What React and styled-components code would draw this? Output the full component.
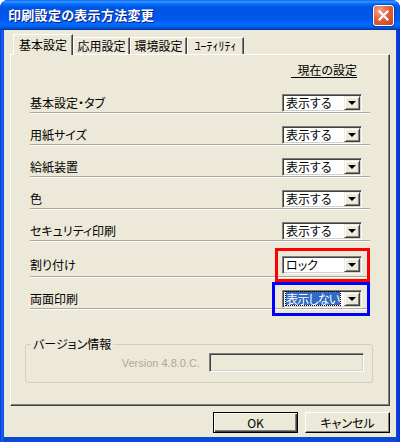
import React from 'react';
import styled, { createGlobalStyle } from 'styled-components';

const GlobalStyle = createGlobalStyle`
    body {
        margin: 0;
        background: #fff;
        font-family: "Noto Sans CJK JP", "Noto Sans", sans-serif;
        font-size: 12px;
        line-height: 14px;
        font-feature-settings: "palt" 1;
    }
    * {
        box-sizing: border-box;
    }
`;

const Frame = styled.div`
    width: 400px;
    height: 442px;
    display: flex;
    flex-direction: column;
    background: linear-gradient(to right, #0831d9 0, #166aee 2px, #0b47da 4px, #0b47da 396px, #0831d9 100%);
    border-radius: 8px 8px 0 0;
    overflow: hidden;
`;

const TitleBar = styled.div`
    height: 30px;
    flex-shrink: 0;
    display: flex;
    align-items: center;
    justify-content: space-between;
    padding: 0 6px 0 8px;
    background: linear-gradient(
        to bottom,
        #0058ee 0%,
        #3593ff 4%,
        #288eff 7%,
        #127dff 10%,
        #036ffc 14%,
        #0262ee 18%,
        #0057e5 24%,
        #0054e3 30%,
        #0055eb 56%,
        #005bf5 68%,
        #026afe 78%,
        #0062ef 88%,
        #0052d6 94%,
        #0040ab 97%,
        #003092 100%
    );
`;

const Title = styled.span`
    color: #fff;
    font-weight: bold;
    font-size: 13px;
    letter-spacing: 0.3px;
    text-shadow: 1px 1px 0 #0a1e7a;
`;

const CloseButton = styled.button`
    width: 21px;
    height: 21px;
    padding: 0;
    display: flex;
    align-items: center;
    justify-content: center;
    border: 1px solid #fff;
    border-radius: 3px;
    background: radial-gradient(circle at 30% 25%, #f0a88c 0%, #e2613c 45%, #c4401c 100%);
    box-shadow: 0 0 0 1px rgba(0, 30, 120, 0.4);
`;

const Client = styled.div`
    flex: 1;
    margin: 0 4px 5px;
    background: #ece9d8;
    display: flex;
    flex-direction: column;
    padding: 4px 6px 0;
`;

const Tabs = styled.div`
    display: flex;
    align-items: flex-end;
    height: 20px;
    padding-left: 3px;
    position: relative;
    z-index: 1;
`;

const Tab = styled.div`
    height: ${p => (p.$active ? 21 : 17)}px;
    min-width: ${p => (p.$active ? 59 : 57)}px;
    margin-bottom: ${p => (p.$active ? -1 : 0)}px;
    padding: ${p => (p.$active ? '0 5px 1px' : '0 3px')};
    display: flex;
    align-items: center;
    justify-content: center;
    background: #ece9d8;
    color: #000;
    border-top: 1px solid #fff;
    border-left: 1px solid #fff;
    border-right: 1px solid #404040;
    box-shadow: inset -1px 0 0 #808080;
    white-space: nowrap;
`;

const Panel = styled.div`
    flex: 1;
    display: flex;
    flex-direction: column;
    border-top: 1px solid #fff;
    border-left: 1px solid #fff;
    border-right: 1px solid #404040;
    border-bottom: 1px solid #404040;
    box-shadow: inset -1px -1px 0 #808080;
    padding: 8px 16px 0 14px;
`;

const ColumnHeader = styled.div`
    align-self: flex-end;
    margin-right: 16px;
    padding-left: 6px;
    border-bottom: 1px solid #000;
`;

const RowList = styled.div`
    margin: 3px 3px 0 5px;
    display: flex;
    flex-direction: column;
`;

const Row = styled.div`
    height: ${p => (p.$tall ? 36 : 32)}px;
    padding-top: 12px;
    display: flex;
    align-items: center;
    justify-content: space-between;
    border-bottom: 1px solid #aca899;
    box-shadow: 0 1px 0 #fff;
`;

const Label = styled.span`
    color: #000;
    white-space: nowrap;
`;

const SelectSlot = styled.div`
    position: relative;
    margin-right: 8px;
`;

const Mark = styled.span`
    position: absolute;
    top: -8px;
    bottom: -8px;
    left: ${p => (p.$wide ? -10 : -7)}px;
    right: -8px;
    border: 3px solid ${p => p.$color};
    pointer-events: none;
`;

const Select = styled.div`
    width: 80px;
    height: 18px;
    display: flex;
    align-items: stretch;
    background: #fff;
    border-top: 1px solid #808080;
    border-left: 1px solid #808080;
    border-right: 1px solid #fff;
    border-bottom: 1px solid #fff;
    box-shadow: inset 1px 1px 0 #404040, inset -1px -1px 0 #d4d0c8;
    padding: 1px;
`;

const Value = styled.span`
    flex: 1;
    display: flex;
    align-items: center;
    padding-left: 2px;
    white-space: nowrap;
`;

const Picked = styled.span`
    background: #316ac5;
    color: #fff;
    line-height: 13px;
    letter-spacing: -0.8px;
    padding-right: 1px;
    outline: 1px dotted #000;
    outline-offset: 0;
`;

const Arrow = styled.span`
    width: 16px;
    flex-shrink: 0;
    display: flex;
    align-items: center;
    justify-content: center;
    background: #ece9d8;
    border-top: 1px solid #ece9d8;
    border-left: 1px solid #ece9d8;
    border-right: 1px solid #404040;
    border-bottom: 1px solid #404040;
    box-shadow: inset 1px 1px 0 #fff, inset -1px -1px 0 #808080;
`;

const Triangle = styled.span`
    width: 0;
    height: 0;
    border-left: 4px solid transparent;
    border-right: 4px solid transparent;
    border-top: 4px solid #000;
`;

const Group = styled.fieldset`
    margin: 28px 0 0;
    padding: 2px 8px 10px;
    border: 1px solid #d0d0bf;
    border-radius: 3px;
`;

const GroupTitle = styled.legend`
    margin-left: -3px;
    padding: 0 2px;
    color: #000;
`;

const VersionRow = styled.div`
    display: flex;
    justify-content: flex-end;
    align-items: center;
    gap: 9px;
    height: 19px;
`;

const VersionText = styled.span`
    font-family: "Liberation Sans", Arial, sans-serif;
    font-size: 11px;
    color: #aca899;
`;

const ReadOnlyBox = styled.div`
    width: 155px;
    height: 19px;
    background: #ece9d8;
    border-top: 1px solid #808080;
    border-left: 1px solid #808080;
    border-right: 1px solid #fff;
    border-bottom: 1px solid #fff;
    box-shadow: inset 1px 1px 0 #404040, inset -1px -1px 0 #d4d0c8;
`;

const ButtonRow = styled.div`
    display: flex;
    justify-content: flex-end;
    gap: 7px;
    padding: 6px 0 4px;
`;

const Button = styled.button`
    width: 85px;
    height: 21px;
    padding: 0;
    font: inherit;
    color: #000;
    background: #ece9d8;
    border-top: 1px solid ${p => (p.$default ? '#000' : '#fff')};
    border-left: 1px solid ${p => (p.$default ? '#000' : '#fff')};
    border-right: 1px solid #000;
    border-bottom: 1px solid #000;
    box-shadow: ${p =>
        p.$default
            ? 'inset 1px 1px 0 #fff, inset -1px -1px 0 #404040, inset -2px -2px 0 #808080'
            : 'inset -1px -1px 0 #808080'};
`;

const settings = [
    { label: '基本設定・タブ', value: '表示する' },
    { label: '用紙サイズ', value: '表示する' },
    { label: '給紙装置', value: '表示する' },
    { label: '色', value: '表示する' },
    { label: 'セキュリティ印刷', value: '表示する' },
    { label: '割り付け', value: 'ロック', mark: '#ff0000', tall: true },
    { label: '両面印刷', value: '表示しない', mark: '#0000ff', picked: true },
];

const tabs = ['基本設定', '応用設定', '環境設定', 'ﾕｰﾃｨﾘﾃｨ'];

const Dropdown = ({ value, picked }) => (
    <Select>
        <Value>{picked ? <Picked>{value}</Picked> : value}</Value>
        <Arrow>
            <Triangle />
        </Arrow>
    </Select>
);

const App = () => {
    return (
        <>
            <GlobalStyle />
            <Frame>
                <TitleBar>
                    <Title>印刷設定の表示方法変更</Title>
                    <CloseButton aria-label="close">
                        <svg width="11" height="11" viewBox="0 0 11 11">
                            <path d="M1.5 1.5 L9.5 9.5 M9.5 1.5 L1.5 9.5" stroke="#fff" strokeWidth="2.2" strokeLinecap="square" />
                        </svg>
                    </CloseButton>
                </TitleBar>
                <Client>
                    <Tabs>
                        {tabs.map((t, i) => (
                            <Tab key={t} $active={i === 0}>{t}</Tab>
                        ))}
                    </Tabs>
                    <Panel>
                        <ColumnHeader>現在の設定</ColumnHeader>
                        <RowList>
                            {settings.map(s => (
                                <Row key={s.label} $tall={s.tall}>
                                    <Label>{s.label}</Label>
                                    <SelectSlot>
                                        <Dropdown value={s.value} picked={s.picked} />
                                        {s.mark && <Mark $color={s.mark} $wide={s.picked} />}
                                    </SelectSlot>
                                </Row>
                            ))}
                        </RowList>
                        <Group>
                            <GroupTitle>バージョン情報</GroupTitle>
                            <VersionRow>
                                <VersionText>Version 4.8.0.C.</VersionText>
                                <ReadOnlyBox />
                            </VersionRow>
                        </Group>
                    </Panel>
                    <ButtonRow>
                        <Button $default>OK</Button>
                        <Button>キャンセル</Button>
                    </ButtonRow>
                </Client>
            </Frame>
        </>
    );
};

export default App;
